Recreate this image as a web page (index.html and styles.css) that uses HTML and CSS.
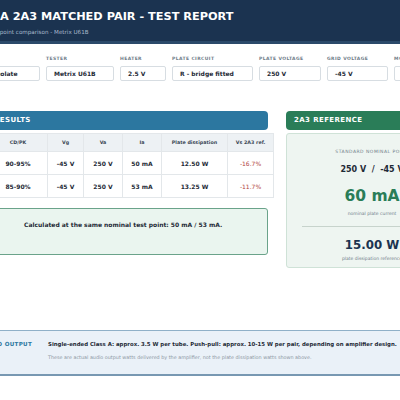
FILE: index.html
```html
<!DOCTYPE html>
<html>
<head>
<meta charset="utf-8">
<link rel="stylesheet" href="styles.css">
</head>
<body>
<div class="page">
  <header class="hdr">
    <h1 class="title">RCA 2A3 MATCHED PAIR - TEST REPORT</h1>
    <p class="sub">Test point comparison - Metrix U61B</p>
  </header>

  <section class="fields">
    <div class="field f1"><span class="lbl">Tube</span><div class="box">Tube - isolate</div></div>
    <div class="field f2"><span class="lbl">Tester</span><div class="box">Metrix U61B</div></div>
    <div class="field f3"><span class="lbl">Heater</span><div class="box">2.5 V</div></div>
    <div class="field f4"><span class="lbl">Plate circuit</span><div class="box">R - bridge fitted</div></div>
    <div class="field f5"><span class="lbl">Plate voltage</span><div class="box">250 V</div></div>
    <div class="field f6"><span class="lbl">Grid voltage</span><div class="box">-45 V</div></div>
    <div class="field f7"><span class="lbl">Mode</span><div class="box">Static</div></div>
  </section>

  <section class="main">
    <div class="left">
      <div class="bar bar-blue">RESULTS</div>
      <table class="tbl">
        <thead>
          <tr><th class="c1">CD/PK</th><th class="c2">Vg</th><th class="c3">Va</th><th class="c4">Ia</th><th class="c5">Plate dissipation</th><th class="c6">Vs 2A3 ref.</th></tr>
        </thead>
        <tbody>
          <tr><td>90-95%</td><td>-45 V</td><td>250 V</td><td>50 mA</td><td>12.50 W</td><td class="neg">-16.7%</td></tr>
          <tr><td>85-90%</td><td>-45 V</td><td>250 V</td><td>53 mA</td><td>13.25 W</td><td class="neg">-11.7%</td></tr>
        </tbody>
      </table>
      <div class="note">Calculated at the same nominal test point: 50 mA / 53 mA.</div>
    </div>
    <div class="right">
      <div class="bar bar-green">2A3 REFERENCE</div>
      <div class="ref">
        <div class="ref-cap">Standard nominal point</div>
        <div class="ref-v">250 V &nbsp;/&nbsp; -45 V</div>
        <div class="ref-big">60 mA</div>
        <div class="ref-small ref-s1">nominal plate current</div>
        <div class="ref-line"></div>
        <div class="ref-w">15.00 W</div>
        <div class="ref-small ref-s2">plate dissipation reference</div>
      </div>
    </div>
  </section>

  <section class="audio">
    <div class="audio-lbl">AUDIO OUTPUT</div>
    <div class="audio-txt">
      <p class="audio-main">Single-ended Class A: approx. 3.5 W per tube. Push-pull: approx. 10-15 W per pair, depending on amplifier design.</p>
      <p class="audio-sub">These are actual audio output watts delivered by the amplifier, not the plate dissipation watts shown above.</p>
    </div>
  </section>
</div>
</body>
</html>
```

FILE: styles.css
```css
html, body {
  margin: 0;
  padding: 0;
  background: #ffffff;
  overflow: hidden;
}
body {
  font-family: "DejaVu Sans", sans-serif;
  color: #1e2a36;
  width: 400px;
  height: 400px;
}
.page {
  width: 560px;
  margin-left: -40px;
}
.hdr {
  background: #1b3350;
  height: 41px;
  border-bottom: 3px solid #2b4a6a;
  box-sizing: content-box;
  padding-left: 23px;
  display: flex;
  flex-direction: column;
}
.title {
  margin: 10px 0 0 0;
  font-size: 11.3px;
  line-height: 14px;
  font-weight: bold;
  color: #ffffff;
}
.sub {
  margin: 5px 0 0 4px;
  font-size: 5.6px;
  line-height: 7px;
  color: #a9bacb;
}
.fields {
  display: flex;
  gap: 6px;
  padding: 12px 0 0 0;
}
.field {
  display: flex;
  flex-direction: column;
  flex: none;
}
.f1 { width: 80px; }
.f2 { width: 68px; }
.f3 { width: 46px; }
.f4 { width: 81px; }
.f5 { width: 62px; }
.f6 { width: 61px; }
.f7 { width: 60px; }
.lbl {
  font-size: 4.5px;
  line-height: 6px;
  text-transform: uppercase;
  letter-spacing: 0.4px;
  color: #6f7d89;
  font-weight: bold;
  margin-bottom: 4px;
  white-space: nowrap;
}
.box {
  height: 15px;
  box-sizing: border-box;
  border: 1px solid #d7dde2;
  border-radius: 2px;
  background: #ffffff;
  font-size: 6px;
  font-weight: bold;
  line-height: 13px;
  padding-left: 7px;
  color: #1e2a36;
  white-space: nowrap;
  overflow: hidden;
}
.f1 .box { padding-left: 11px; }
.main {
  display: flex;
  gap: 18px;
  padding-top: 30px;
  padding-left: 26px;
  align-items: flex-start;
}
.left {
  width: 282px;
  flex: none;
  display: flex;
  flex-direction: column;
}
.right {
  width: 172px;
  flex: none;
  display: flex;
  flex-direction: column;
}
.bar {
  height: 19px;
  border-radius: 4px;
  color: #ffffff;
  font-size: 7px;
  font-weight: bold;
  letter-spacing: 0.4px;
  line-height: 19px;
  padding-left: 8px;
}
.bar-blue { background: #2c77a0; }
.bar-green { background: #2a7d58; }
.tbl {
  margin-top: 3px;
  margin-left: 2px;
  border-collapse: collapse;
  width: 279px;
  table-layout: fixed;
}
.tbl th {
  background: #edf1f4;
  font-size: 4.8px;
  font-weight: bold;
  color: #3a4754;
  height: 17px;
  padding: 0;
  border: 1px solid #e3e7ea;
  text-align: center;
}
.tbl td {
  font-size: 6px;
  font-weight: bold;
  color: #1e2a36;
  height: 22px;
  padding: 0;
  border: 1px solid #e3e7ea;
  text-align: center;
}
.tbl td.neg {
  color: #b0403c;
  font-weight: normal;
}
.c1 { width: 58px; }
.c2 { width: 35px; }
.c3 { width: 38px; }
.c4 { width: 38px; }
.c5 { width: 65px; }
.c6 { width: 45px; }
.note {
  margin-top: 10px;
  height: 47px;
  box-sizing: border-box;
  background: #eaf5ef;
  border: 1px solid #6aa38a;
  border-radius: 3px;
  font-size: 6px;
  font-weight: bold;
  color: #1e2a36;
  padding: 12px 0 0 37px;
}
.ref {
  margin-top: 3px;
  height: 135px;
  box-sizing: border-box;
  background: #eef5f1;
  border: 1px solid #cfe2d7;
  border-radius: 3px;
  display: flex;
  flex-direction: column;
  align-items: center;
  padding-top: 15px;
}
.ref-cap {
  font-size: 4.5px;
  line-height: 6px;
  text-transform: uppercase;
  letter-spacing: 0.5px;
  color: #6f7d89;
  white-space: nowrap;
}
.ref-v {
  margin-top: 10px;
  font-size: 8px;
  line-height: 10px;
  font-weight: bold;
  color: #1e2a36;
  white-space: nowrap;
}
.ref-big {
  margin-top: 11px;
  font-size: 15.5px;
  line-height: 20px;
  font-weight: bold;
  color: #2a7d58;
  white-space: nowrap;
}
.ref-small {
  font-size: 4.5px;
  line-height: 5px;
  color: #6f7d89;
  white-space: nowrap;
}
.ref-s1 { margin-top: 5px; }
.ref-s2 { margin-top: 4px; }
.ref-line {
  margin-top: 10px;
  width: 140px;
  height: 1px;
  background: #c7d3cc;
}
.ref-w {
  margin-top: 11px;
  font-size: 11.8px;
  line-height: 14px;
  font-weight: bold;
  color: #1b3350;
  white-space: nowrap;
}
.audio {
  margin-top: 62px;
  height: 46px;
  box-sizing: border-box;
  background: #eaf1f8;
  border-top: 1px solid #8fb0c8;
  border-bottom: 2px solid #7898b2;
  display: flex;
  align-items: flex-start;
  gap: 16px;
  padding-top: 10px;
  padding-left: 12px;
}
.audio-lbl {
  width: 60px;
  flex: none;
  font-size: 5.6px;
  font-weight: bold;
  color: #2c77a0;
  letter-spacing: 0.3px;
  white-space: nowrap;
  text-align: right;
}
.audio-txt p { margin: 0; white-space: nowrap; }
.audio-main {
  font-size: 5.4px;
  font-weight: bold;
  color: #1e2a36;
}
.audio-sub {
  margin-top: 7px !important;
  font-size: 4.85px;
  color: #8a96a2;
}
```
